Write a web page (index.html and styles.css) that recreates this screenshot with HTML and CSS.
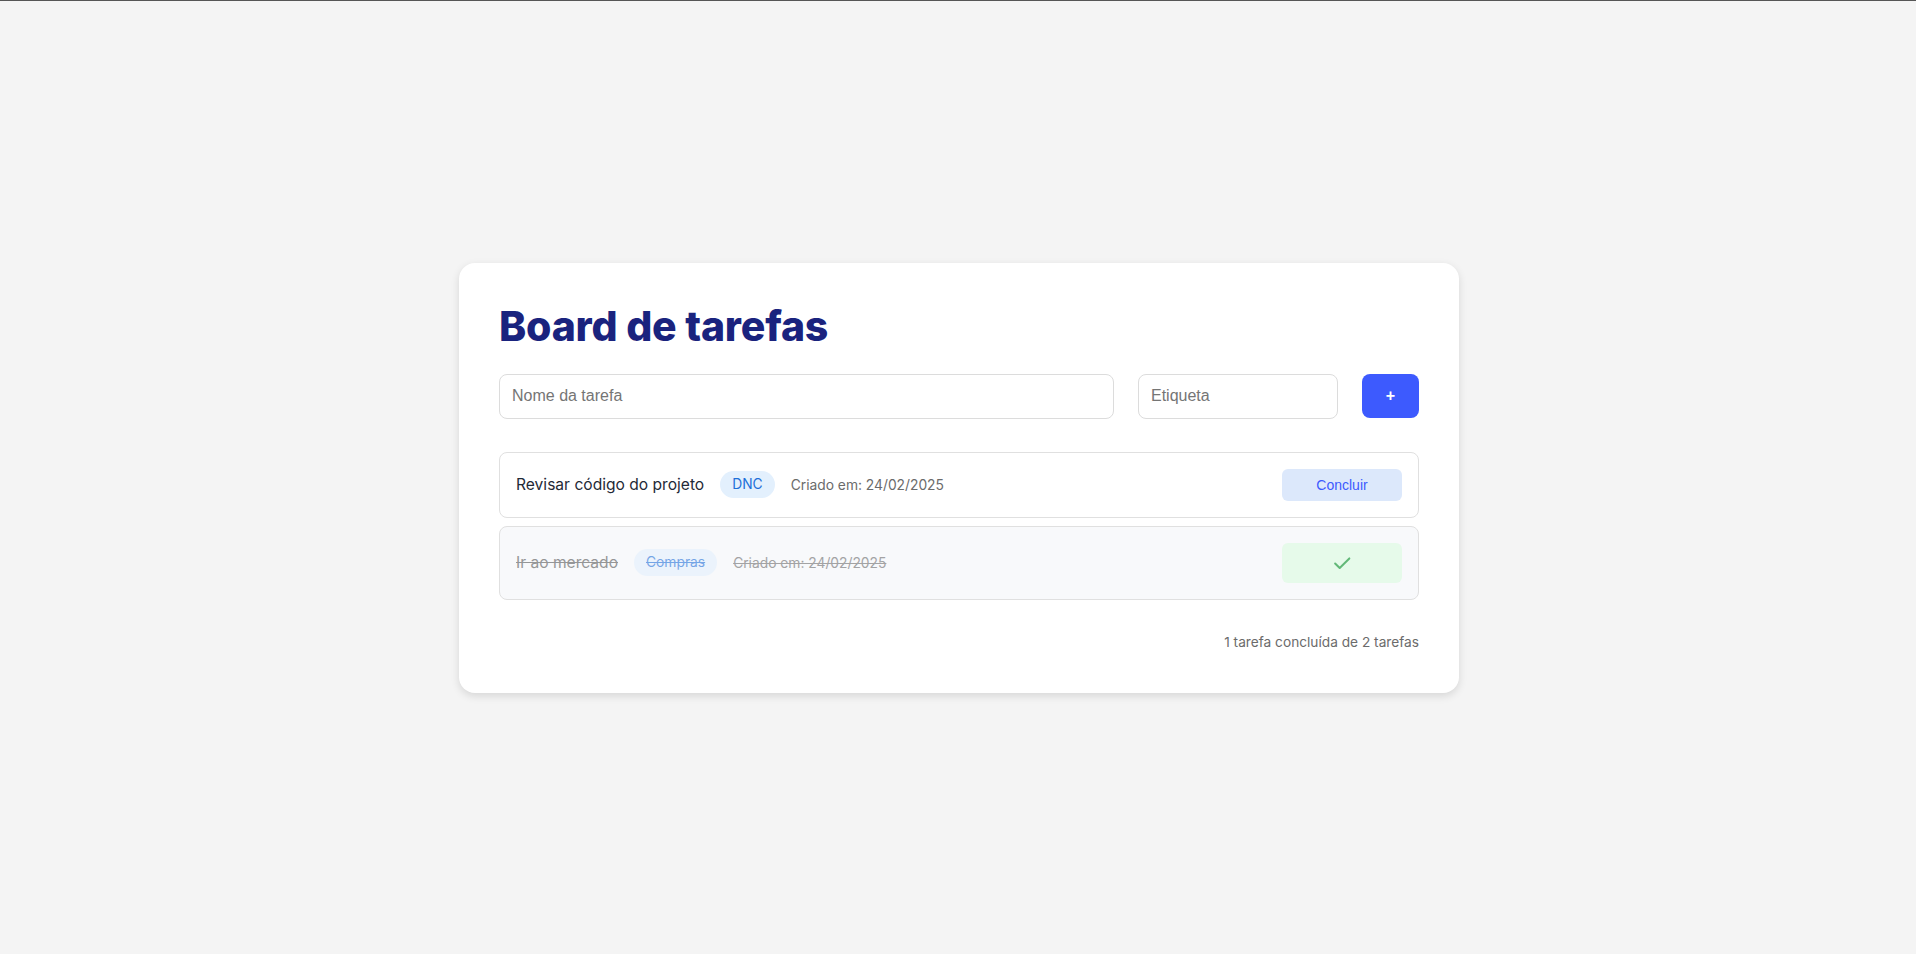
FILE: index.html
```html
<!DOCTYPE html>
<html lang="pt-BR">
<head>
<meta charset="utf-8">
<title>Board de tarefas</title>
<link rel="stylesheet" href="styles.css">
</head>
<body>
<div class="topline"></div>
<main class="page">
  <section class="card">
    <h1 class="title">Board de tarefas</h1>
    <form class="add-form">
      <input class="field field-name" type="text" placeholder="Nome da tarefa">
      <input class="field field-tag" type="text" placeholder="Etiqueta">
      <button class="add-btn" type="button">+</button>
    </form>
    <ul class="tasks">
      <li class="task">
        <span class="task-name">Revisar código do projeto</span>
        <span class="tag">DNC</span>
        <span class="date">Criado em: 24/02/2025</span>
        <button class="done-btn" type="button">Concluir</button>
      </li>
      <li class="task task-done">
        <span class="task-name">Ir ao mercado</span>
        <span class="tag">Compras</span>
        <span class="date">Criado em: 24/02/2025</span>
        <button class="check-btn" type="button" aria-label="Concluída">
          <svg width="22" height="22" viewBox="0 0 24 24" fill="none" stroke="#62b878" stroke-width="2.2" stroke-linecap="round" stroke-linejoin="round"><path d="M4.5 12.5l5 5L20 7"/></svg>
        </button>
      </li>
    </ul>
    <p class="summary">1 tarefa concluída de 2 tarefas</p>
  </section>
</main>
</body>
</html>
```

FILE: styles.css
```css
* { box-sizing: border-box; }
html, body { margin: 0; padding: 0; height: 100%; }
body {
  background: #f4f4f4;
  font-family: "Inter", "Roboto", "Liberation Sans", sans-serif;
  color: #1f2937;
}
.topline {
  height: 1px;
  background: #555;
}
.page {
  height: calc(100% - 1px);
  display: flex;
  align-items: center;
  justify-content: center;
  padding-left: 2px;
}
.card {
  width: 1000px;
  background: #fff;
  border-radius: 16px;
  box-shadow: 0 3px 8px rgba(0,0,0,0.12);
  padding: 40px 40px 41px;
}
.title {
  margin: 0 0 24px;
  font-family: "Inter", sans-serif;
  font-weight: 800;
  font-size: 41px;
  line-height: 47px;
  color: #1a237e;
  letter-spacing: -0.2px;
}
.add-form {
  display: flex;
  gap: 24px;
  align-items: center;
  margin: 0 0 33px;
}
.field {
  height: 45px;
  border: 1px solid #dcdcdc;
  border-radius: 8px;
  padding: 0 12px;
  font-family: "Liberation Sans", Arial, sans-serif;
  font-size: 16px;
  color: #333;
  background: #fff;
  outline: none;
}
.field::placeholder { color: #757575; }
.field-name { flex: 1; }
.field-tag { width: 200px; }
.add-btn {
  width: 57px;
  height: 44px;
  border: none;
  border-radius: 8px;
  background: #3d5afe;
  color: #fff;
  font-family: "Liberation Sans", Arial, sans-serif;
  font-size: 16px;
  font-weight: 700;
}
.tasks {
  list-style: none;
  margin: 0;
  padding: 0;
  display: flex;
  flex-direction: column;
  gap: 8px;
}
.task {
  display: flex;
  align-items: center;
  gap: 16px;
  padding: 16px;
  border: 1px solid #e0e0e0;
  border-radius: 8px;
  background: #fff;
}
.task-name {
  font-size: 15.6px;
  color: #1f2a37;
}
.tag {
  background: #e3f0fd;
  color: #1e6fd9;
  border-radius: 14px;
  padding: 0 12px;
  height: 27px;
  line-height: 27px;
  font-size: 13.8px;
}
.date {
  font-size: 13.8px;
  color: #6b6b6b;
}
.done-btn {
  margin-left: auto;
  width: 120px;
  height: 32px;
  border: none;
  border-radius: 6px;
  background: #dce8fb;
  color: #3d5afe;
  font-family: "Liberation Sans", Arial, sans-serif;
  font-size: 14px;
}
.task-done {
  background: #f8f9fb;
}
.task-done .task-name,
.task-done .tag,
.task-done .date {
  text-decoration: line-through;
  opacity: 0.6;
}
.task-done .task-name { color: #555; }
.check-btn {
  margin-left: auto;
  width: 120px;
  height: 40px;
  border: none;
  border-radius: 6px;
  background: #e6faea;
  display: flex;
  align-items: center;
  justify-content: center;
  padding: 0;
}
.summary {
  margin: 32px 0 0;
  text-align: right;
  font-size: 13.7px;
  line-height: 20px;
  color: #6b6b6b;
}
```
